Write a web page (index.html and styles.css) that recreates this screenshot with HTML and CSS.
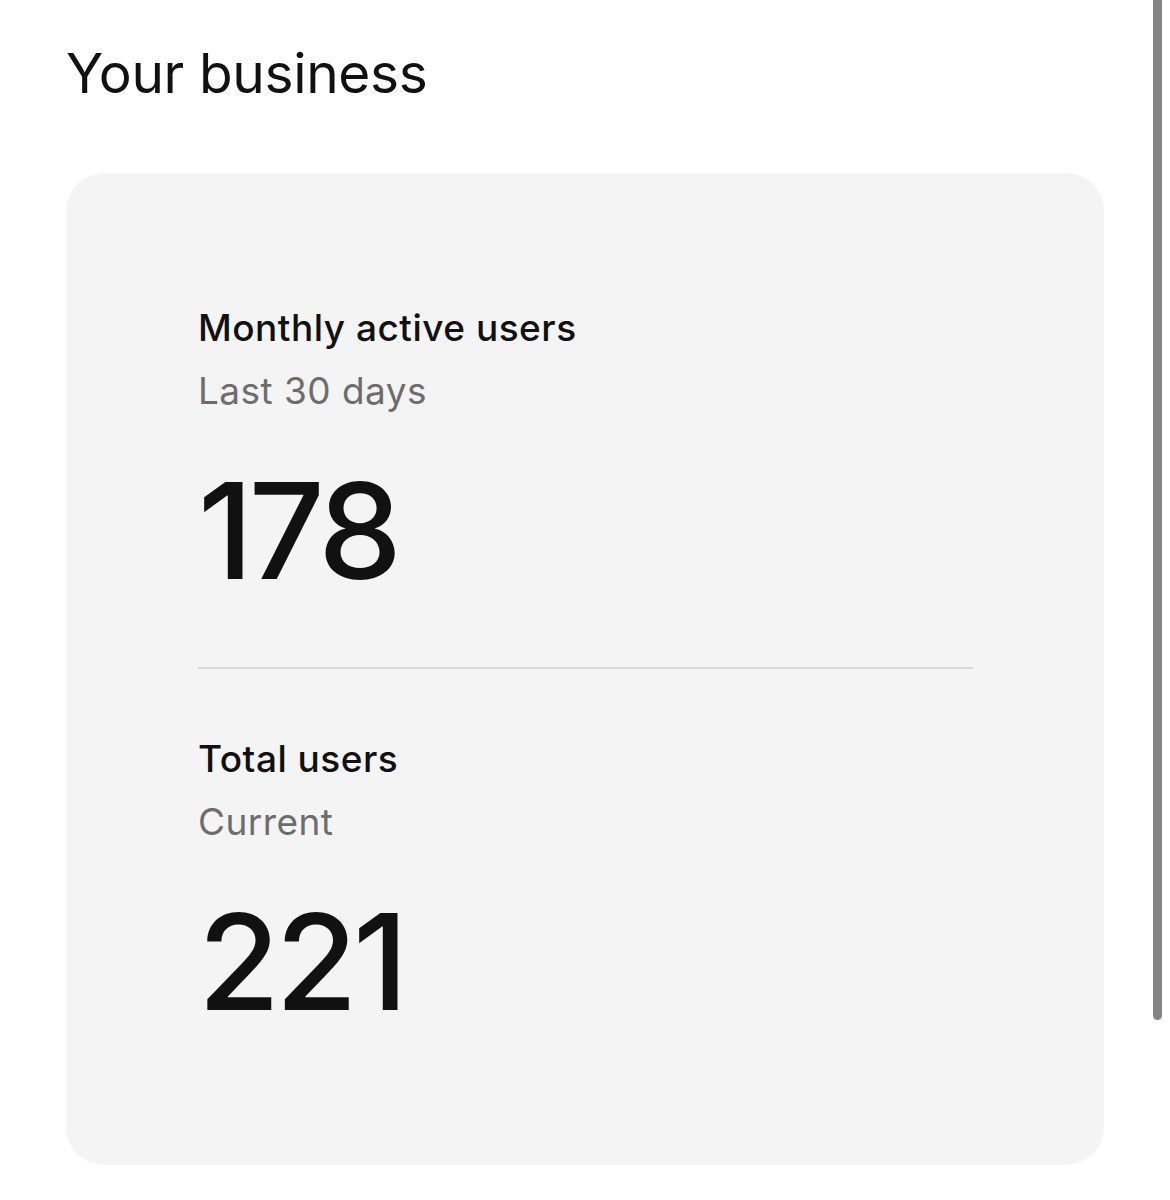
FILE: index.html
```html
<!DOCTYPE html>
<html>
<head>
<meta charset="utf-8">
<link rel="stylesheet" href="styles.css">
</head>
<body>
<main class="page">
  <h1 class="title">Your business</h1>
  <section class="card">
    <div class="metric">
      <div class="label">Monthly active users</div>
      <div class="sub">Last 30 days</div>
      <div class="value">178</div>
    </div>
    <hr class="divider">
    <div class="metric">
      <div class="label">Total users</div>
      <div class="sub">Current</div>
      <div class="value">221</div>
    </div>
  </section>
</main>
<div class="scroll-thumb"></div>
</body>
</html>
```

FILE: styles.css
```css
html, body {
  margin: 0;
  padding: 0;
  background: #ffffff;
}
body {
  font-family: Inter, "Noto Sans", "Liberation Sans", sans-serif;
  color: #111111;
  width: 1170px;
  height: 1200px;
  overflow: hidden;
  position: relative;
}
.page {
  padding: 40px 0 0 66px;
}
.title {
  margin: 0;
  font-size: 55px;
  line-height: 66px;
  font-weight: 400;
  letter-spacing: -0.35px;
  color: #111111;
}
.card {
  margin-top: 67px;
  width: 1038px;
  box-sizing: border-box;
  height: 992px;
  background: #f4f4f4;
  border-radius: 38px;
  padding: 133px 131px 0 132px;
}
.metric {
  display: flex;
  flex-direction: column;
}
.label {
  font-size: 37px;
  line-height: 44px;
  font-weight: 500;
  letter-spacing: 0.5px;
  color: #111111;
}
.sub {
  margin-top: 19px;
  font-size: 37px;
  line-height: 44px;
  font-weight: 400;
  letter-spacing: 0.45px;
  color: #6d6d6d;
}
.value {
  margin-top: 48px;
  font-size: 133px;
  line-height: 140px;
  font-weight: 500;
  letter-spacing: -4.5px;
  color: #111111;
}
.divider {
  border: 0;
  height: 2px;
  background: #d9d9d9;
  margin: 66px 0 68px 0;
}
.scroll-thumb {
  position: absolute;
  top: -10px;
  right: 8px;
  width: 9px;
  height: 1030px;
  background: #858585;
  border-radius: 5px;
}
```
